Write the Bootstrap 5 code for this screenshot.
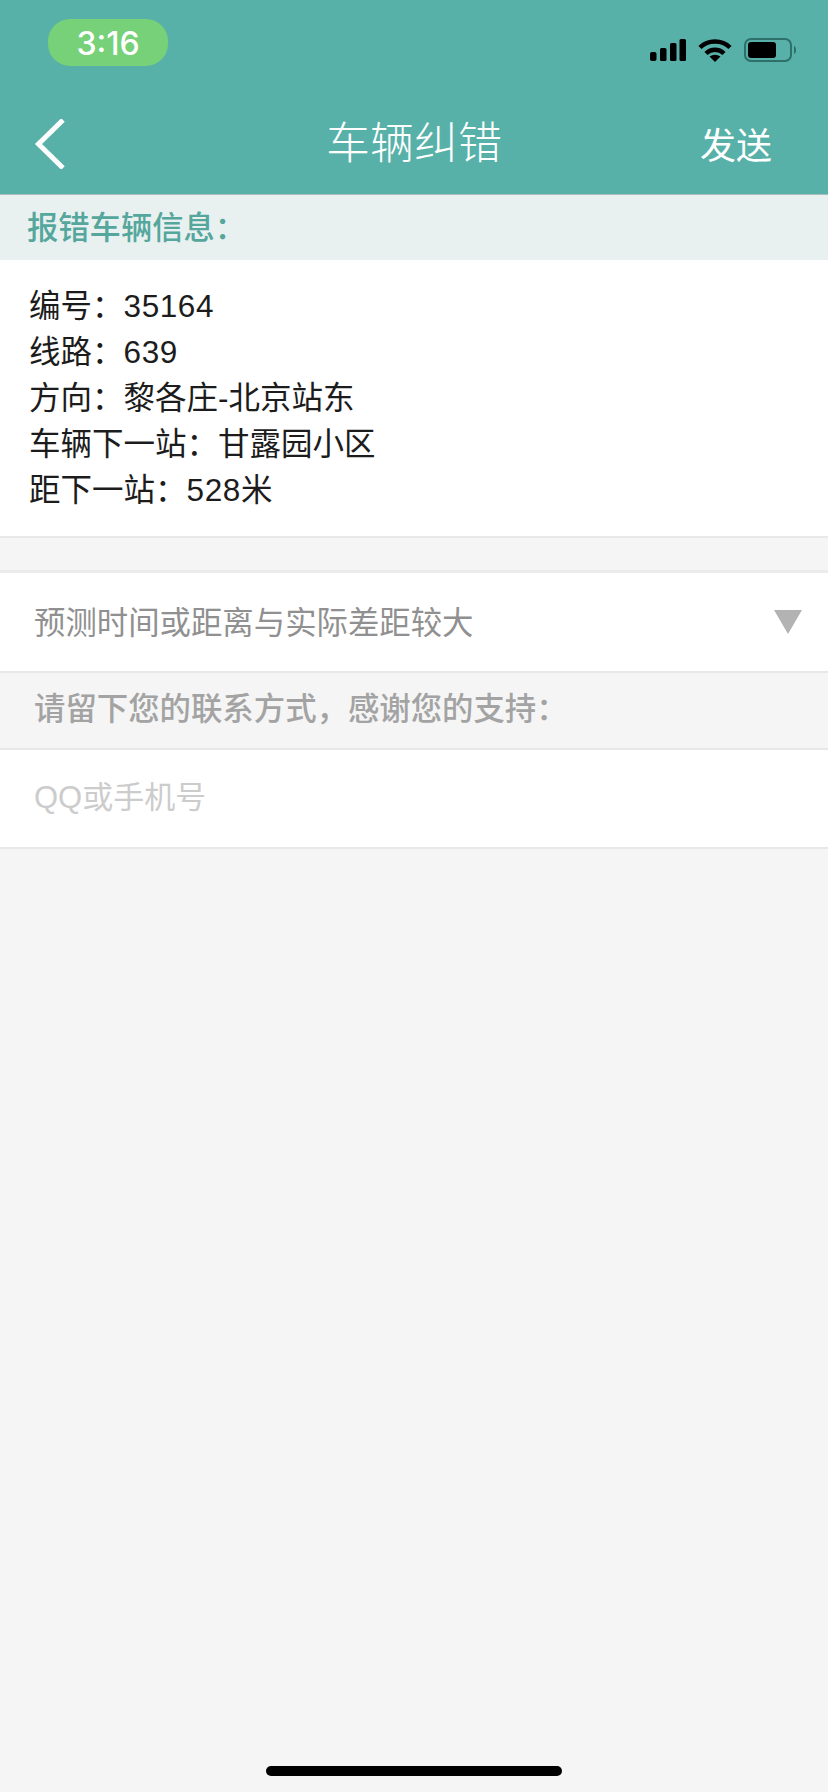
<!DOCTYPE html>
<html lang="zh-CN">
<head>
  <meta charset="UTF-8">
  <title>车辆纠错</title>
  <link href="https://cdn.jsdelivr.net/npm/bootstrap@5.3.3/dist/css/bootstrap.min.css" rel="stylesheet">
  <style>
    body { background: #f5f5f5; font-family: "Liberation Sans", "Noto Sans CJK SC", sans-serif; }
    .app-head { background: #57b1a8; border-bottom: 1px solid #a9bdbb; height: 195px; }
    .status-row { height: 88px; padding: 19px 32px 0 48px; }
    .time-pill { width: 120px; height: 47px; border-radius: 22px; background: #77d178; color: #fff; font: 500 32px/49px Inter, "Liberation Sans", sans-serif; text-align: center; }
    .status-icons { margin-top: 19px; gap: 12px; }
    .nav-row { height: 106px; color: #fff; }
    .nav-side { flex: 0 0 240px; }
    .back-link { padding: 6px 0 0 34px; line-height: 0; }
    .nav-title { flex: 1 1 0; font-size: 44px; font-weight: 300; line-height: 1; padding-top: 6px; text-align: center; }
    .send-link { color: #fff; font-size: 36px; line-height: 1; padding: 12px 56px 0 0; text-align: right; text-decoration: none; }
    .info-title { background: #e9f1f0; color: #55a79d; font-size: 31.3px; font-weight: 500; height: 65px; line-height: 67px; padding-left: 27px; }
    .info-box { background: #fff; border-bottom: 2px solid #e8e8e8; color: #1c1c1c; font-size: 31.5px; height: 278px; line-height: 46px; padding: 23px 29px 0; }
    .info-box p { margin: 0; }
    .num-val { letter-spacing: .6px; }
    .picker-row { background: #fff; border-top: 3px solid #ebebeb; border-bottom: 2px solid #e8e8e8; color: #909090; font-size: 31.4px; height: 103px; margin-top: 32px; padding: 4px 26px 0 34px; }
    .picker-arrow { border-left: 14px solid transparent; border-right: 14px solid transparent; border-top: 24px solid #b3b3b3; margin-top: -4px; }
    .contact-tip { color: #a3a3a3; font-size: 31.4px; font-weight: 500; height: 75px; line-height: 73px; padding-left: 34px; }
    .contact-input.form-control { background: #fff; border: 0; border-top: 2px solid #e8e8e8; border-bottom: 2px solid #e8e8e8; border-radius: 0; box-shadow: none; font-size: 31px; height: 101px; padding: 0 34px 1px; }
    .contact-input::placeholder { color: #ccc; opacity: 1; }
    .home-bar { background: #000; border-radius: 5px; height: 10px; margin-bottom: 16px; width: 296px; }
  </style>
</head>
<body class="d-flex flex-column vh-100 overflow-hidden">

  <header class="app-head">
    <div class="status-row d-flex justify-content-between align-items-start">
      <div class="time-pill">3:16</div>
      <div class="status-icons d-flex align-items-center">
        <svg width="36" height="24" viewBox="0 0 36 24"><rect x="0" y="14" width="6.500" height="9" rx="2"/><rect x="10" y="10" width="6.500" height="13" rx="1.500"/><rect x="20" y="5" width="6.500" height="18" rx="1.500"/><rect x="29.500" y="1" width="6.500" height="22" rx="1.500"/></svg>
        <svg width="34" height="24" viewBox="0 0 34 24" fill="none" stroke="#000" stroke-width="4.500"><path d="M2 9.500C10 1.500 24 1.500 32 9.500"/><path d="M8 15.500C13 10.500 21 10.500 26 15.500"/><path d="M11.500 18.500Q17 15 22.500 18.500L17 24Z" fill="#000" stroke="none"/></svg>
        <svg width="52" height="24" viewBox="0 0 52 24"><rect x="1" y="1" width="46" height="22" rx="6" fill="none" stroke="#2d6f69" stroke-width="2"/><rect x="4" y="4" width="28" height="16" rx="3"/><path d="M50 8v8c1.500-.5 2-2 2-4s-.5-3.500-2-4z" fill="#2d6f69"/></svg>
      </div>
    </div>
    <div class="nav-row d-flex align-items-center">
      <div class="nav-side back-link">
        <svg width="32" height="50" viewBox="0 0 32 50" fill="none" stroke="#fff" stroke-width="5"><path d="M29 1 4.500 25 29 49"/></svg>
      </div>
      <div class="nav-title">车辆纠错</div>
      <a class="nav-side send-link" href="#">发送</a>
    </div>
  </header>

  <div class="info-title">报错车辆信息：</div>
  <section class="info-box">
    <p>编号：<span class="num-val">35164</span></p>
    <p>线路：<span class="num-val">639</span></p>
    <p>方向：黎各庄-北京站东</p>
    <p>车辆下一站：甘露园小区</p>
    <p>距下一站：<span class="num-val">528</span>米</p>
  </section>

  <div class="picker-row d-flex align-items-center justify-content-between">
    <span>预测时间或距离与实际差距较大</span>
    <span class="picker-arrow"></span>
  </div>
  <div class="contact-tip">请留下您的联系方式，感谢您的支持：</div>
  <input class="contact-input form-control" type="text" placeholder="QQ或手机号">

  <div class="home-bar mt-auto mx-auto"></div>

</body>
</html>
